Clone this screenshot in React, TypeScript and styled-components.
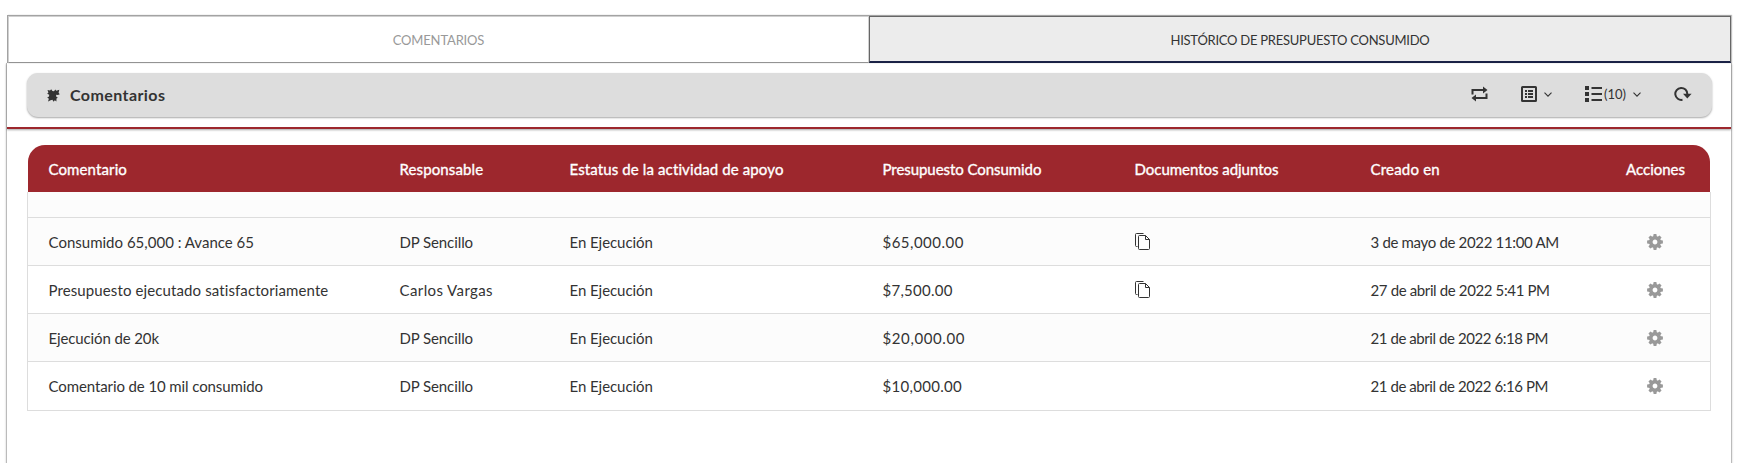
import React from "react";
import styled, { createGlobalStyle } from "styled-components";

const Global = createGlobalStyle`
  * { box-sizing: border-box; }
  body { margin: 0; background: #fff; overflow: hidden; color: #333; font-family: Lato, "Open Sans", sans-serif; font-size: 15px; }
  svg { display: block; flex: none; }
`;

const Page = styled.div`
  height: 463px;
  padding: 15px 5px 0 6px;
  display: flex;
  flex-direction: column;
`;

const Tabs = styled.nav`
  display: grid;
  grid-template-columns: 861px 1fr;
  height: 48px;
  margin: 0 1px;
  border: solid #a3a3a3;
  border-width: 1px 0 0 1px;
  box-shadow: 1px 0 1px rgba(0, 0, 0, 0.25);
`;

const Tab = styled.button<{ $active?: boolean }>`
  display: flex;
  align-items: center;
  justify-content: center;
  padding: ${(p) => (p.$active ? 2 : 1)}px 0 0;
  font: 13px Lato, sans-serif;
  border: 1px solid ${(p) => (p.$active ? "#666" : "#d0d0d0")};
  border-bottom: ${(p) => (p.$active ? "2px solid #1b2347" : "1px solid #999")};
  background: ${(p) => (p.$active ? "#ececec" : "#fff")};
  color: ${(p) => (p.$active ? "#333" : "#999")};
`;

const Label = styled.span<{ $ls?: number }>`
  letter-spacing: ${(p) => p.$ls ?? 0}px;
  font-variant-ligatures: none;
  white-space: nowrap;
`;

const Panel = styled.main`
  flex: 1;
  border: 1px solid #bbb;
  border-width: 0 1px;
  box-shadow: 0 1px 2px rgba(0, 0, 0, 0.2);
`;

const ToolbarArea = styled.div`
  height: 66px;
  padding: 10px 19px 0 20px;
  border-bottom: 2px solid #9d272d;
  box-shadow: 0 1px 2px rgba(0, 0, 0, 0.35);
`;

const Toolbar = styled.header`
  display: flex;
  align-items: center;
  height: 44px;
  padding: 0 20px;
  border-radius: 11px;
  background: #ddd;
  box-shadow: 0 1px 2px rgba(0, 0, 0, 0.35);
`;

const Title = styled.h1`
  flex: 1;
  margin: 0 0 1px 10px;
  font-size: 16px;
  font-weight: 700;
`;

const Tools = styled.div`
  display: flex;
  align-items: center;
  padding-bottom: 2px;
  gap: 33px;
`;

const Tool = styled.span<{ $gap?: number }>`
  display: flex;
  align-items: center;
  gap: ${(p) => p.$gap ?? 0}px;
  font-size: 13px;
`;

const Grid = styled.section`
  margin: 16px 20px 0;
`;

const Row = styled.div<{ $h: number; $alt?: boolean }>`
  display: grid;
  grid-template-columns: 351px 170px 313px 252px 236px 1fr 59px;
  align-items: center;
  height: ${(p) => p.$h}px;
  padding: 0 26px 0 20.5px;
  border: 1px solid #ddd;
  border-top: 0;
  background: ${(p) => (p.$alt ? "#fcfcfc" : "#fff")};
`;

const HeadRow = styled(Row)`
  margin: 0 1px;
  padding-right: 25px;
  border: 0;
  border-radius: 17px 17px 0 0;
  background: #9d272d;
  color: #fff;
  -webkit-text-stroke: 0.35px #fff;
`;

const Cell = styled.div`
  display: flex;
  align-items: center;
`;

const Action = styled(Cell)`
  justify-content: center;
`;

const PuzzleIcon = () => (
  <svg width="13" height="13" viewBox="0 0 13 13" fill="#333">
    <path d="M.5 1 3 1.6 4.2.3 5.4 2 7 2.2 8.3.4 9.3 1.8 12.3.7 11.6 3.8 12.8 5.2 10.9 6.1 9.3 5.7 9 7.3 10.8 8.8 9.5 9.4 9.4 12.4 7.8 11.2 6.6 12.7 5.4 10.7 3.6 11.2 1 12.6 1.9 9.8.2 8.6 2 7.5 2.2 5.8.2 4.8 1.4 3.4Z" />
  </svg>
);

const SwapIcon = () => (
  <svg width="17" height="16" viewBox="0 0 17 16" fill="none" stroke="#333" strokeWidth="2">
    <path d="M1.500 8.500V4H13M15.500 7.500V12H4" />
    <path d="M12 .5 16.500 4 12 7.500ZM5 8.500.5 12 5 15.500Z" fill="#333" stroke="none" />
  </svg>
);

const BoxListIcon = () => (
  <svg width="16" height="16" viewBox="0 0 16 16" fill="#333">
    <rect x="1" y="1" width="14" height="14" rx=".5" fill="none" stroke="#333" strokeWidth="2" />
    <path d="M4 4h2v2H4zM7 4h5v2H7zM4 7h2v2H4zM7 7h5v2H7zM4 10h2v2H4zM7 10h5v2H7z" />
  </svg>
);

const ListIcon = () => (
  <svg width="17" height="16" viewBox="0 0 17 16" fill="#333">
    <path d="M0 0h4v4H0zM0 6h4v4H0zM0 12h4v4H0zM6.500 1H17v2H6.500zM6.500 7H17v2H6.500zM6.500 13H17v2H6.500z" />
  </svg>
);

const Chevron = () => (
  <svg width="8" height="5" viewBox="0 0 8 5" fill="none" stroke="#333" strokeWidth="1.100">
    <path d="M.5.7 4 4.200 7.500.7" />
  </svg>
);

const ReloadIcon = () => (
  <svg width="18" height="16" viewBox="0 0 18 16" fill="none" stroke="#333" strokeWidth="2">
    <path d="M8.500 13.800A6 6 0 1 1 13.300 8" />
    <path d="M9 7.700h8.600l-4.300 4.700z" fill="#333" stroke="none" />
  </svg>
);

const FilesIcon = () => (
  <svg width="15" height="17" viewBox="0 0 15 17" fill="none" stroke="#333" strokeWidth="1">
    <path d="M2.500 13.500H1.500Q.5 13.500.5 12.500V1.500Q.5.5 1.500.5H8.500" />
    <path d="M3.500 3.500Q3.500 2.500 4.500 2.500H10.500L14.500 6.500V15.500Q14.500 16.500 13.500 16.500H4.500Q3.500 16.500 3.500 15.500ZM10.500 2.500V6.500H14.500" />
  </svg>
);

const GearIcon = () => (
  <svg width="16" height="16" viewBox="-8 -8 16 16" fill="#999">
    <circle r="4.200" fill="none" stroke="#999" strokeWidth="3.600" />
    {[0, 45, 90, 135, 180, 225, 270, 315].map((a) => (
      <path key={a} d="M-1.900-5 -1.400-7.900H1.400L1.900-5Z" transform={`rotate(${a})`} />
    ))}
  </svg>
);

type Text = [string, number];

const heads: Text[] = [
  ["Comentario", 0.12],
  ["Responsable", 0.12],
  ["Estatus de la actividad de apoyo", 0.12],
  ["Presupuesto Consumido", -0.06],
  ["Documentos adjuntos", -0.03],
  ["Creado en", 0.2],
  ["Acciones", 0],
];

interface Entry {
  comment: Text;
  owner: Text;
  amount: Text;
  date: Text;
  files?: boolean;
}

const entries: Entry[] = [
  { comment: ["Consumido 65,000 : Avance 65", 0.01], owner: ["DP Sencillo", -0.1], amount: ["$65,000.00", 0.48], date: ["3 de mayo de 2022 11:00 AM", -0.33], files: true },
  { comment: ["Presupuesto ejecutado satisfactoriamente", 0.11], owner: ["Carlos Vargas", 0.4], amount: ["$7,500.00", 0.25], date: ["27 de abril de 2022 5:41 PM", -0.37], files: true },
  { comment: ["Ejecución de 20k", -0.12], owner: ["DP Sencillo", -0.1], amount: ["$20,000.00", 0.6], date: ["21 de abril de 2022 6:18 PM", -0.43] },
  { comment: ["Comentario de 10 mil consumido", -0.1], owner: ["DP Sencillo", -0.1], amount: ["$10,000.00", 0.3], date: ["21 de abril de 2022 6:16 PM", -0.43] },
];

const TextCell = ({ text }: { text: Text }) => (
  <Cell>
    <Label $ls={text[1]}>{text[0]}</Label>
  </Cell>
);

export default function App() {
  return (
    <Page>
      <Global />
      <Tabs>
        <Tab><Label $ls={-0.16}>COMENTARIOS</Label></Tab>
        <Tab $active><Label $ls={-0.25}>HISTÓRICO DE PRESUPUESTO CONSUMIDO</Label></Tab>
      </Tabs>
      <Panel>
        <ToolbarArea>
          <Toolbar>
            <PuzzleIcon />
            <Title><Label $ls={0.42}>Comentarios</Label></Title>
            <Tools>
              <Tool><SwapIcon /></Tool>
              <Tool $gap={7}><BoxListIcon /><Chevron /></Tool>
              <Tool $gap={7}>
                <Tool $gap={2}><ListIcon /><Label>(10)</Label></Tool>
                <Chevron />
              </Tool>
              <Tool><ReloadIcon /></Tool>
            </Tools>
          </Toolbar>
        </ToolbarArea>
        <Grid>
          <HeadRow $h={47}>
            {heads.map((h) => <TextCell key={h[0]} text={h} />)}
          </HeadRow>
          <Row $h={26} $alt />
          {entries.map((e, i) => (
            <Row key={i} $h={i === entries.length - 1 ? 49 : 48} $alt={i % 2 === 0}>
              <TextCell text={e.comment} />
              <TextCell text={e.owner} />
              <TextCell text={["En Ejecución", -0.05]} />
              <TextCell text={e.amount} />
              <Cell>{e.files && <FilesIcon />}</Cell>
              <TextCell text={e.date} />
              <Action><GearIcon /></Action>
            </Row>
          ))}
        </Grid>
      </Panel>
    </Page>
  );
}
